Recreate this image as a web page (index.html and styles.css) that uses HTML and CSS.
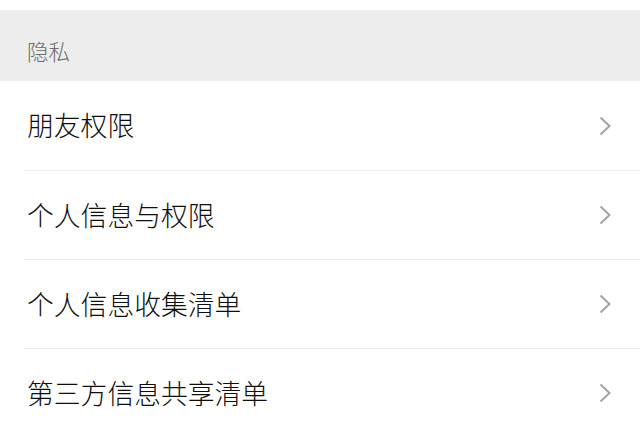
FILE: index.html
```html
<!DOCTYPE html>
<html lang="zh-CN">
<head>
    <meta charset="UTF-8">
    <meta name="viewport" content="width=device-width, initial-scale=1.0">
    <title>隐私</title>
    <link rel="stylesheet" href="styles.css">
</head>
<body>
    <div class="section-title">隐私</div>

    <ul class="menu">
        <li class="menu-item">
            <span class="label">朋友权限</span>
            <svg class="arrow" viewBox="0 0 12 20"><polyline points="1.5,1.5 10.5,10 1.5,18.5"/></svg>
        </li>
        <li class="menu-item">
            <span class="label">个人信息与权限</span>
            <svg class="arrow" viewBox="0 0 12 20"><polyline points="1.5,1.5 10.5,10 1.5,18.5"/></svg>
        </li>
        <li class="menu-item">
            <span class="label">个人信息收集清单</span>
            <svg class="arrow" viewBox="0 0 12 20"><polyline points="1.5,1.5 10.5,10 1.5,18.5"/></svg>
        </li>
        <li class="menu-item">
            <span class="label">第三方信息共享清单</span>
            <svg class="arrow" viewBox="0 0 12 20"><polyline points="1.5,1.5 10.5,10 1.5,18.5"/></svg>
        </li>
    </ul>
</body>
</html>
```

FILE: styles.css
```css
body {
    font-family: "Noto Sans CJK SC", "Noto Sans", sans-serif;
    color: #0e0e0e;
    background-color: #fff;
    margin: 0;
    padding-top: 10px;
}
.section-title {
    background-color: #ededed;
    color: #6c6c6c;
    font-size: 21.5px;
    font-weight: 300;
    height: 71px;
    box-sizing: border-box;
    padding: 26px 0 0 27px;
    line-height: 30px;
}
.menu {
    list-style: none;
    margin: 0;
    padding: 0 0 0 24px;
}
.menu-item {
    display: flex;
    align-items: center;
    justify-content: space-between;
    height: 89px;
    box-sizing: border-box;
    border-top: 1px solid #ededed;
    padding: 0 29px 0 3px;
}
.menu-item:first-child {
    border-top: none;
}
.label {
    font-size: 26.8px;
    font-weight: 300;
    line-height: 1;
}
.arrow {
    width: 12px;
    height: 20px;
}
.arrow polyline {
    fill: none;
    stroke: #a3a3a3;
    stroke-width: 2;
}
```
